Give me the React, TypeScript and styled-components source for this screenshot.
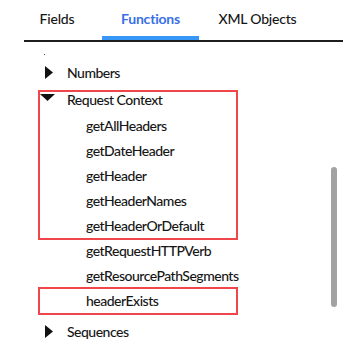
import React from "react";
import styled, { createGlobalStyle } from "styled-components";

const Global = createGlobalStyle`
  html, body { margin: 0; padding: 0; background: #ffffff; }
  body { font-family: Lato, "Noto Sans", sans-serif; color: #161616; }
  * { box-sizing: border-box; }
`;

const Page = styled.div`
  width: 343px;
  height: 351px;
  overflow: hidden;
  display: flex;
  flex-direction: column;
`;

const TabBar = styled.div`
  display: flex;
  margin-left: 24px;
  height: 42px;
  border-bottom: 2px solid #1e1e1e;
`;

const Tab = styled.div<{ $active?: boolean; $w: number; $ml?: number }>`
  width: ${(p) => p.$w}px;
  margin-left: ${(p) => p.$ml ?? 0}px;
  height: 40px;
  display: flex;
  align-items: flex-start;
  justify-content: center;
  padding-top: 10px;
  font-size: 14px;
  letter-spacing: -0.2px;
  font-weight: ${(p) => (p.$active ? 700 : 500)};
  color: ${(p) => (p.$active ? "#3a70e6" : "#161616")};
  border-bottom: 4px solid ${(p) => (p.$active ? "#3797f7" : "transparent")};
`;

const Body = styled.div`
  flex: 1;
  display: flex;
`;

const List = styled.div`
  flex: 1;
  display: flex;
  flex-direction: column;
`;

const Clipped = styled.div`
  height: 17.5px;
  padding: 12px 0 0 44px;
`;

const Dot = styled.div`
  width: 1px;
  height: 1px;
  background: #555;
`;

const GroupRow = styled.div`
  height: 27px;
  display: flex;
  align-items: center;
  padding-left: 40px;
  padding-bottom: 1px;
  font-size: 14px;
  font-weight: 500;
  letter-spacing: -0.5px;
`;

const ArrowSlot = styled.span`
  width: 27px;
  display: flex;
  align-items: center;
`;

const ItemRow = styled.div`
  height: 25px;
  display: flex;
  align-items: center;
  padding-left: 86px;
  padding-bottom: 2px;
  font-size: 14px;
  font-weight: 500;
  letter-spacing: -0.5px;
`;

const Children = styled.div`
  display: flex;
  flex-direction: column;
  padding-bottom: 5px;
`;

const Highlight = styled.div<{ $top: number; $bottom: number }>`
  position: relative;
  display: flex;
  flex-direction: column;
  &::after {
    content: "";
    position: absolute;
    left: 38px;
    width: 196px;
    top: ${(p) => p.$top}px;
    bottom: ${(p) => p.$bottom}px;
    border: 2px solid #f0464b;
    pointer-events: none;
  }
`;

const ScrollTrack = styled.div`
  width: 13px;
  padding: 125px 0 0 1px;
`;

const Thumb = styled.div`
  width: 6px;
  height: 140px;
  border-radius: 3px;
  background: #a2a2a2;
`;

const RightArrow = () => (
  <svg width="8" height="13" viewBox="0 0 8 13" style={{ marginLeft: 5 }}>
    <polygon points="0,0 8,6.5 0,13" fill="#111" />
  </svg>
);

const DownArrow = () => (
  <svg width="15" height="7" viewBox="0 0 15 7" style={{ marginTop: -5 }}>
    <polygon points="0,0 15,0 7.5,7" fill="#111" />
  </svg>
);

const requestItems = [
  "getAllHeaders",
  "getDateHeader",
  "getHeader",
  "getHeaderNames",
  "getHeaderOrDefault",
];

export default function App() {
  return (
    <Page>
      <Global />
      <TabBar>
        <Tab $w={66}>Fields</Tab>
        <Tab $w={97} $ml={12} $active>
          Functions
        </Tab>
        <Tab $w={97} $ml={10}>
          XML Objects
        </Tab>
      </TabBar>
      <Body>
        <List>
          <Clipped>
            <Dot />
          </Clipped>
          <GroupRow>
            <ArrowSlot>
              <RightArrow />
            </ArrowSlot>
            Numbers
          </GroupRow>
          <Highlight $top={3.5} $bottom={-1.5}>
            <GroupRow>
              <ArrowSlot>
                <DownArrow />
              </ArrowSlot>
              Request Context
            </GroupRow>
            {requestItems.map((t) => (
              <ItemRow key={t}>{t}</ItemRow>
            ))}
          </Highlight>
          <Children>
            <ItemRow>getRequestHTTPVerb</ItemRow>
            <ItemRow>getResourcePathSegments</ItemRow>
            <Highlight $top={-1.5} $bottom={-1.5}>
              <ItemRow>headerExists</ItemRow>
            </Highlight>
          </Children>
          <GroupRow>
            <ArrowSlot>
              <RightArrow />
            </ArrowSlot>
            Sequences
          </GroupRow>
        </List>
        <ScrollTrack>
          <Thumb />
        </ScrollTrack>
      </Body>
    </Page>
  );
}
